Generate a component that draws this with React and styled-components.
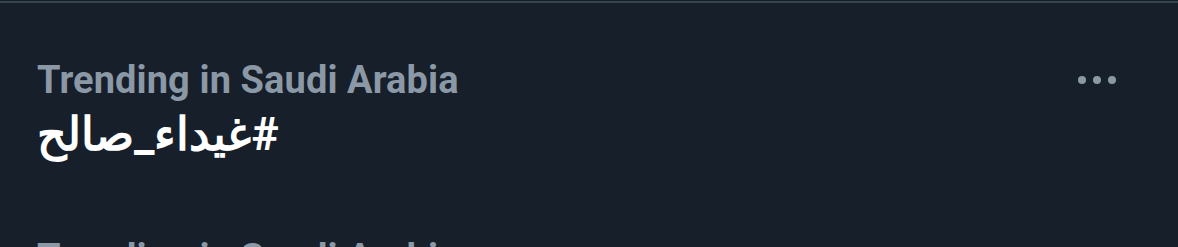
import React from 'react';
import styled, { createGlobalStyle } from 'styled-components';

const GlobalStyle = createGlobalStyle`
  html, body {
    margin: 0;
    padding: 0;
    background: #15202b;
  }
  body {
    font-family: Roboto, "Liberation Sans", sans-serif;
    overflow: hidden;
  }
`;

const Page = styled.div`
  width: 1178px;
  height: 247px;
  background: #161f2a;
  border-top: 2px solid #38444d;
  margin-top: 1px;
  overflow: hidden;
`;

const Trend = styled.div`
  display: flex;
  align-items: flex-start;
  justify-content: space-between;
  padding: 54px 62px 0 37px;
  height: 178px;
  box-sizing: border-box;
`;

const Info = styled.div`
  display: flex;
  flex-direction: column;
`;

const Context = styled.div`
  color: #8b98a5;
  font-size: 38px;
  font-weight: 700;
  line-height: 46px;
  letter-spacing: 0.1px;
`;

const Topic = styled.div`
  color: #ffffff;
  font-size: 46px;
  font-weight: 700;
  line-height: 56px;
  margin-top: 3px;
`;

const Hashtag = styled.span`
  display: inline-block;
  direction: rtl;
  unicode-bidi: isolate;
`;

const More = styled.button`
  display: flex;
  gap: 7px;
  align-items: center;
  background: none;
  border: 0;
  padding: 0;
  margin-top: 19px;
  cursor: pointer;
`;

const Dot = styled.span`
  width: 8px;
  height: 8px;
  border-radius: 50%;
  background: #8b98a5;
`;

const trends = [
  { context: 'Trending in Saudi Arabia', topic: '#غيداء_صالح' },
  { context: 'Trending in Saudi Arabia', topic: '#السعودية' },
];

export default function App() {
  return (
    <>
      <GlobalStyle />
      <Page>
        {trends.map((t, i) => (
          <Trend key={i}>
            <Info>
              <Context>{t.context}</Context>
              <Topic>
                <Hashtag dir="rtl">{t.topic}</Hashtag>
              </Topic>
            </Info>
            <More aria-label="More">
              <Dot />
              <Dot />
              <Dot />
            </More>
          </Trend>
        ))}
      </Page>
    </>
  );
}
